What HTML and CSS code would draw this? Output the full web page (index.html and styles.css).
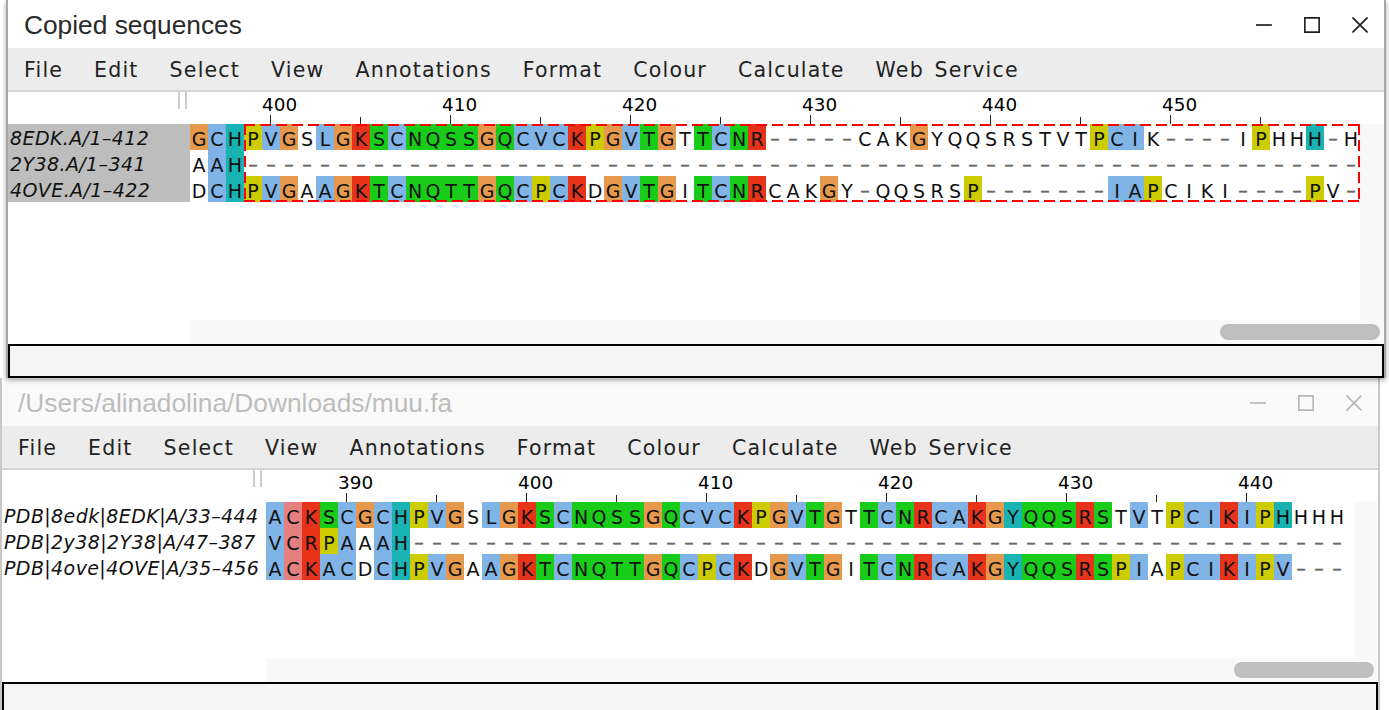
FILE: index.html
```html
<!DOCTYPE html>
<html lang="en">
<head>
<meta charset="utf-8">
<title>Copied sequences</title>
<link rel="stylesheet" href="styles.css">
</head>
<body>
<section class="win win-front">
  <header class="titlebar">
    <h1 class="title">Copied sequences</h1>
    <div class="controls">
      <svg viewBox="0 0 16 16" class="ctl"><path d="M0 8H16"/></svg>
      <svg viewBox="0 0 16 16" class="ctl"><path d="M.8 .8H15.2V15.2H.8Z"/></svg>
      <svg viewBox="0 0 16 16" class="ctl"><path d="M.5 .5L15.5 15.5M15.5 .5L.5 15.5"/></svg>
    </div>
  </header>
  <nav class="menu"><span>File</span><span>Edit</span><span>Select</span><span>View</span><span>Annotations</span><span>Format</span><span>Colour</span><span>Calculate</span><span>Web Service</span></nav>
  <div class="panel panel-a">
    <div class="handle"></div>
    <div class="ruler">
      <div class="seg major"><span class="num">400</span><span class="tick"></span></div>
      <div class="seg"><span class="tick"></span></div>
      <div class="seg major"><span class="num">410</span><span class="tick"></span></div>
      <div class="seg"><span class="tick"></span></div>
      <div class="seg major"><span class="num">420</span><span class="tick"></span></div>
      <div class="seg"><span class="tick"></span></div>
      <div class="seg major"><span class="num">430</span><span class="tick"></span></div>
      <div class="seg"><span class="tick"></span></div>
      <div class="seg major"><span class="num">440</span><span class="tick"></span></div>
      <div class="seg"><span class="tick"></span></div>
      <div class="seg major"><span class="num">450</span><span class="tick"></span></div>
      <div class="seg"><span class="tick"></span></div>
    </div>
    <div class="names names-selected">
      <div class="name">8EDK.A/1–412</div>
      <div class="name">2Y38.A/1–341</div>
      <div class="name">4OVE.A/1–422</div>
    </div>
    <div class="rows">
      <div class="row"><i class="o">G</i><i class="b">C</i><i class="t">H</i><i class="y">P</i><i class="b">V</i><i class="o">G</i><i>S</i><i class="b">L</i><i class="o">G</i><i class="r">K</i><i class="g">S</i><i class="b">C</i><i class="g">N</i><i class="g">Q</i><i class="g">S</i><i class="g">S</i><i class="o">G</i><i class="g">Q</i><i class="b">C</i><i class="b">V</i><i class="b">C</i><i class="r">K</i><i class="y">P</i><i class="o">G</i><i class="b">V</i><i class="g">T</i><i class="o">G</i><i>T</i><i class="g">T</i><i class="b">C</i><i class="g">N</i><i class="r">R</i><i class="d">–</i><i class="d">–</i><i class="d">–</i><i class="d">–</i><i class="d">–</i><i>C</i><i>A</i><i>K</i><i class="o">G</i><i>Y</i><i>Q</i><i>Q</i><i>S</i><i>R</i><i>S</i><i>T</i><i>V</i><i>T</i><i class="y">P</i><i class="b">C</i><i class="b">I</i><i>K</i><i class="d">–</i><i class="d">–</i><i class="d">–</i><i class="d">–</i><i>I</i><i class="y">P</i><i>H</i><i>H</i><i class="t">H</i><i class="d">–</i><i>H</i></div>
      <div class="row"><i>A</i><i class="b">A</i><i class="t">H</i><i class="d">–</i><i class="d">–</i><i class="d">–</i><i class="d">–</i><i class="d">–</i><i class="d">–</i><i class="d">–</i><i class="d">–</i><i class="d">–</i><i class="d">–</i><i class="d">–</i><i class="d">–</i><i class="d">–</i><i class="d">–</i><i class="d">–</i><i class="d">–</i><i class="d">–</i><i class="d">–</i><i class="d">–</i><i class="d">–</i><i class="d">–</i><i class="d">–</i><i class="d">–</i><i class="d">–</i><i class="d">–</i><i class="d">–</i><i class="d">–</i><i class="d">–</i><i class="d">–</i><i class="d">–</i><i class="d">–</i><i class="d">–</i><i class="d">–</i><i class="d">–</i><i class="d">–</i><i class="d">–</i><i class="d">–</i><i class="d">–</i><i class="d">–</i><i class="d">–</i><i class="d">–</i><i class="d">–</i><i class="d">–</i><i class="d">–</i><i class="d">–</i><i class="d">–</i><i class="d">–</i><i class="d">–</i><i class="d">–</i><i class="d">–</i><i class="d">–</i><i class="d">–</i><i class="d">–</i><i class="d">–</i><i class="d">–</i><i class="d">–</i><i class="d">–</i><i class="d">–</i><i class="d">–</i><i class="d">–</i><i class="d">–</i><i class="d">–</i></div>
      <div class="row"><i>D</i><i class="b">C</i><i class="t">H</i><i class="y">P</i><i class="b">V</i><i class="o">G</i><i>A</i><i class="b">A</i><i class="o">G</i><i class="r">K</i><i class="g">T</i><i class="b">C</i><i class="g">N</i><i class="g">Q</i><i class="g">T</i><i class="g">T</i><i class="o">G</i><i class="g">Q</i><i class="b">C</i><i class="y">P</i><i class="b">C</i><i class="r">K</i><i>D</i><i class="o">G</i><i class="b">V</i><i class="g">T</i><i class="o">G</i><i>I</i><i class="g">T</i><i class="b">C</i><i class="g">N</i><i class="r">R</i><i>C</i><i>A</i><i>K</i><i class="o">G</i><i>Y</i><i class="d">–</i><i>Q</i><i>Q</i><i>S</i><i>R</i><i>S</i><i class="y">P</i><i class="d">–</i><i class="d">–</i><i class="d">–</i><i class="d">–</i><i class="d">–</i><i class="d">–</i><i class="d">–</i><i class="b">I</i><i class="b">A</i><i class="y">P</i><i>C</i><i>I</i><i>K</i><i>I</i><i class="d">–</i><i class="d">–</i><i class="d">–</i><i class="d">–</i><i class="y">P</i><i>V</i><i class="d">–</i></div>
      <div class="selection"></div>
    </div>
    <div class="gutter-right"></div>
    <div class="gutter-bottom"></div>
    <div class="thumb"></div>
  </div>
  <div class="status"></div>
</section>

<section class="win win-back">
  <header class="titlebar">
    <h1 class="title">/Users/alinadolina/Downloads/muu.fa</h1>
    <div class="controls">
      <svg viewBox="0 0 16 16" class="ctl"><path d="M0 8H16"/></svg>
      <svg viewBox="0 0 16 16" class="ctl"><path d="M.8 .8H15.2V15.2H.8Z"/></svg>
      <svg viewBox="0 0 16 16" class="ctl"><path d="M.5 .5L15.5 15.5M15.5 .5L.5 15.5"/></svg>
    </div>
  </header>
  <nav class="menu"><span>File</span><span>Edit</span><span>Select</span><span>View</span><span>Annotations</span><span>Format</span><span>Colour</span><span>Calculate</span><span>Web Service</span></nav>
  <div class="panel panel-b">
    <div class="handle"></div>
    <div class="ruler">
      <div class="seg major"><span class="num">390</span><span class="tick"></span></div>
      <div class="seg"><span class="tick"></span></div>
      <div class="seg major"><span class="num">400</span><span class="tick"></span></div>
      <div class="seg"><span class="tick"></span></div>
      <div class="seg major"><span class="num">410</span><span class="tick"></span></div>
      <div class="seg"><span class="tick"></span></div>
      <div class="seg major"><span class="num">420</span><span class="tick"></span></div>
      <div class="seg"><span class="tick"></span></div>
      <div class="seg major"><span class="num">430</span><span class="tick"></span></div>
      <div class="seg"><span class="tick"></span></div>
      <div class="seg major"><span class="num">440</span><span class="tick"></span></div>
    </div>
    <div class="names">
      <div class="name">PDB|8edk|8EDK|A/33–444</div>
      <div class="name">PDB|2y38|2Y38|A/47–387</div>
      <div class="name">PDB|4ove|4OVE|A/35–456</div>
    </div>
    <div class="rows">
      <div class="row"><i class="b">A</i><i class="p">C</i><i class="r">K</i><i class="g">S</i><i class="b">C</i><i class="o">G</i><i class="b">C</i><i class="t">H</i><i class="y">P</i><i class="b">V</i><i class="o">G</i><i>S</i><i class="b">L</i><i class="o">G</i><i class="r">K</i><i class="g">S</i><i class="b">C</i><i class="g">N</i><i class="g">Q</i><i class="g">S</i><i class="g">S</i><i class="o">G</i><i class="g">Q</i><i class="b">C</i><i class="b">V</i><i class="b">C</i><i class="r">K</i><i class="y">P</i><i class="o">G</i><i class="b">V</i><i class="g">T</i><i class="o">G</i><i>T</i><i class="g">T</i><i class="b">C</i><i class="g">N</i><i class="r">R</i><i class="b">C</i><i class="b">A</i><i class="r">K</i><i class="o">G</i><i class="t">Y</i><i class="g">Q</i><i class="g">Q</i><i class="g">S</i><i class="r">R</i><i class="g">S</i><i>T</i><i class="b">V</i><i>T</i><i class="y">P</i><i class="b">C</i><i class="b">I</i><i class="r">K</i><i class="b">I</i><i class="y">P</i><i class="t">H</i><i>H</i><i>H</i><i>H</i></div>
      <div class="row"><i class="b">V</i><i class="p">C</i><i class="r">R</i><i class="y">P</i><i class="b">A</i><i>A</i><i class="b">A</i><i class="t">H</i><i class="d">–</i><i class="d">–</i><i class="d">–</i><i class="d">–</i><i class="d">–</i><i class="d">–</i><i class="d">–</i><i class="d">–</i><i class="d">–</i><i class="d">–</i><i class="d">–</i><i class="d">–</i><i class="d">–</i><i class="d">–</i><i class="d">–</i><i class="d">–</i><i class="d">–</i><i class="d">–</i><i class="d">–</i><i class="d">–</i><i class="d">–</i><i class="d">–</i><i class="d">–</i><i class="d">–</i><i class="d">–</i><i class="d">–</i><i class="d">–</i><i class="d">–</i><i class="d">–</i><i class="d">–</i><i class="d">–</i><i class="d">–</i><i class="d">–</i><i class="d">–</i><i class="d">–</i><i class="d">–</i><i class="d">–</i><i class="d">–</i><i class="d">–</i><i class="d">–</i><i class="d">–</i><i class="d">–</i><i class="d">–</i><i class="d">–</i><i class="d">–</i><i class="d">–</i><i class="d">–</i><i class="d">–</i><i class="d">–</i><i class="d">–</i><i class="d">–</i><i class="d">–</i></div>
      <div class="row"><i class="b">A</i><i class="p">C</i><i class="r">K</i><i class="b">A</i><i class="b">C</i><i>D</i><i class="b">C</i><i class="t">H</i><i class="y">P</i><i class="b">V</i><i class="o">G</i><i>A</i><i class="b">A</i><i class="o">G</i><i class="r">K</i><i class="g">T</i><i class="b">C</i><i class="g">N</i><i class="g">Q</i><i class="g">T</i><i class="g">T</i><i class="o">G</i><i class="g">Q</i><i class="b">C</i><i class="y">P</i><i class="b">C</i><i class="r">K</i><i>D</i><i class="o">G</i><i class="b">V</i><i class="g">T</i><i class="o">G</i><i>I</i><i class="g">T</i><i class="b">C</i><i class="g">N</i><i class="r">R</i><i class="b">C</i><i class="b">A</i><i class="r">K</i><i class="o">G</i><i class="t">Y</i><i class="g">Q</i><i class="g">Q</i><i class="g">S</i><i class="r">R</i><i class="g">S</i><i class="y">P</i><i class="b">I</i><i>A</i><i class="y">P</i><i class="b">C</i><i class="b">I</i><i class="r">K</i><i class="b">I</i><i class="y">P</i><i class="b">V</i><i class="d">–</i><i class="d">–</i><i class="d">–</i></div>
    </div>
    <div class="gutter-right"></div>
    <div class="gutter-bottom"></div>
    <div class="thumb"></div>
  </div>
  <div class="status"></div>
</section>
</body>
</html>
```
FILE: styles.css
```css
* { box-sizing: border-box; }
html, body { margin: 0; height: 100%; }
body {
  width: 1389px;
  height: 710px;
  overflow: hidden;
  background: #fff;
  font-family: "DejaVu Sans", sans-serif;
  color: #111;
}
.win {
  width: 1380px;
  display: flex;
  flex-direction: column;
  border-left: 2px solid #a6a6a6;
  border-right: 2px solid #a6a6a6;
  background: #fff;
}
.win-front {
  position: relative;
  z-index: 2;
  margin-left: 6px;
  height: 378px;
  box-shadow: 0 2px 5px rgba(0, 0, 0, .35);
}
.win-back {
  border-color: #c8c8c8;
  height: 338px;
}
.titlebar {
  height: 48px;
  flex: none;
  display: flex;
  align-items: center;
  justify-content: space-between;
  padding: 2px 16px 0 16px;
}
.win-back .titlebar { background: #fafafa; }
.title {
  margin: 0;
  font: 400 26.3px "Liberation Sans", Arial, sans-serif;
  color: #2a2a2a;
}
.win-back .title { color: #bdbdbd; }
.controls {
  display: flex;
  gap: 32px;
  stroke: #222;
}
.win-back .controls { stroke: #b8b8b8; }
.ctl {
  display: block;
  width: 16px;
  height: 16px;
  fill: none;
  stroke-width: 1.7;
}
.menu {
  height: 44px;
  flex: none;
  display: flex;
  align-items: center;
  gap: 31px;
  padding: 2px 16px 0;
  background: #ececec;
  border-bottom: 2px solid #d4d4d4;
  font-size: 20.5px;
  letter-spacing: 1.2px;
  word-spacing: 3px;
  color: #222;
}
.panel {
  position: relative;
  flex: 1;
  display: grid;
  grid-template-rows: 32px 78px 1fr 24px;
}
.panel-a { grid-template-columns: 182px 1170px 24px; }
.panel-b { grid-template-columns: 264px 1088px 24px; }
.handle {
  position: absolute;
  top: 0;
  height: 17px;
  width: 9px;
  border-left: 2px solid #ccc;
  border-right: 2px solid #ccc;
}
.panel-a .handle { left: 170px; }
.panel-b .handle { left: 251px; }
.ruler {
  grid-column: 2;
  grid-row: 1;
  display: flex;
  padding-left: 80px;
  overflow: hidden;
}
.seg {
  flex: none;
  width: 90px;
  display: flex;
  flex-direction: column;
  justify-content: flex-end;
}
.num {
  font-size: 18.4px;
  line-height: 20px;
  color: #000;
  margin-left: -8px;
}
.tick {
  display: block;
  width: 1px;
  height: 7px;
  background: #222;
}
.major .tick { height: 9px; }
.names {
  grid-column: 1;
  grid-row: 2;
  padding-left: 2px;
}
.names-selected { background: #bdbdbd; }
.name {
  height: 26px;
  line-height: 29px;
  font-size: 19px;
  font-style: italic;
  letter-spacing: .4px;
  color: #111;
  white-space: nowrap;
}
.rows {
  position: relative;
  grid-column: 2;
  grid-row: 2;
}
.row {
  display: flex;
  height: 26px;
}
.row i {
  flex: none;
  display: block;
  width: 18px;
  height: 26px;
  line-height: 30px;
  font-size: 19px;
  font-style: normal;
  text-align: center;
  color: #111;
}
.row .d {
  line-height: 28px;
  color: #6a6a6a;
  -webkit-text-stroke: .4px #6a6a6a;
}
.row .o { background: #e6994d; }
.row .b { background: #80b3e6; }
.row .t { background: #1ab3b3; }
.row .y { background: #cccc00; }
.row .g { background: #1acc1a; }
.row .r { background: #e6331a; }
.row .p { background: #e68080; }
.selection {
  position: absolute;
  left: 54px;
  top: 0;
  right: 0;
  bottom: 0;
  background:
    repeating-linear-gradient(90deg, #f00 0 11px, transparent 11px 16px) top / 100% 2px no-repeat,
    repeating-linear-gradient(90deg, #f00 0 11px, transparent 11px 16px) bottom / 100% 2px no-repeat,
    repeating-linear-gradient(180deg, #f00 0 11px, transparent 11px 16px) left / 2px 100% no-repeat,
    repeating-linear-gradient(180deg, #f00 0 11px, transparent 11px 16px) right / 2px 100% no-repeat;
}
.gutter-right {
  grid-column: 3;
  grid-row: 2 / 5;
  background: #f9f9f9;
}
.gutter-bottom {
  grid-column: 2;
  grid-row: 4;
  background: #f9f9f9;
}
.thumb {
  position: absolute;
  bottom: 4px;
  right: 4px;
  height: 16px;
  border-radius: 8px;
  background: #bfbfbf;
}
.panel-a .thumb { width: 160px; }
.panel-b .thumb { width: 140px; }
.status {
  flex: none;
  height: 34px;
  background: #f5f5f5;
  border: 2px solid #000;
}
```
